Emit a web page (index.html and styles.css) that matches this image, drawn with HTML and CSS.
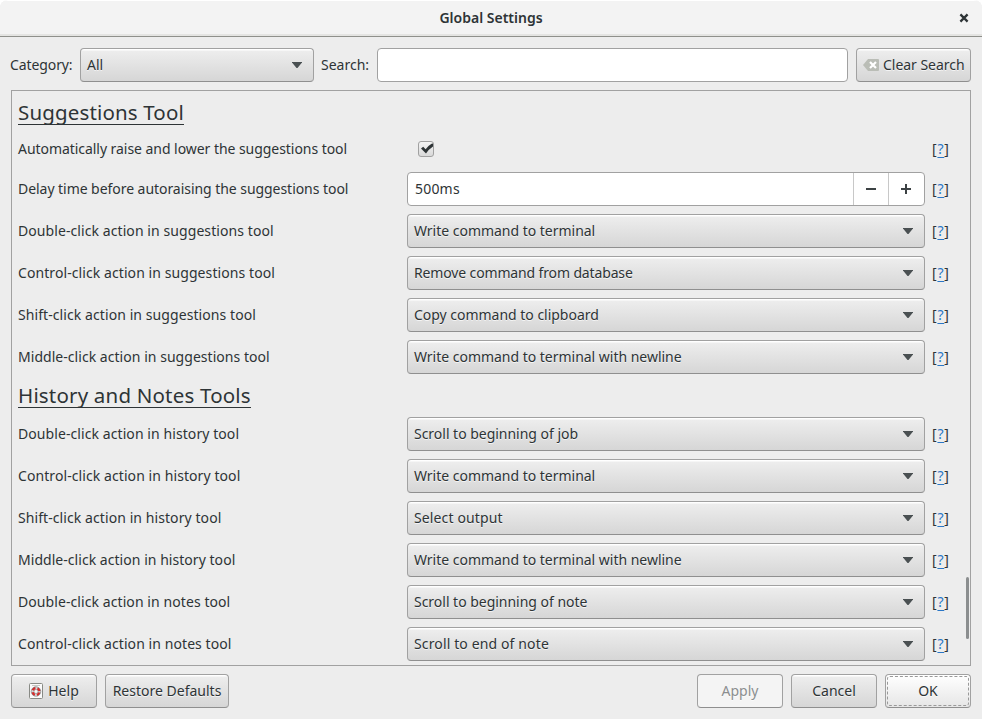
FILE: index.html
```html
<!DOCTYPE html>
<html lang="en">
<head>
<meta charset="utf-8">
<title>Global Settings</title>
<link rel="stylesheet" href="styles.css">
</head>
<body>
<div class="window">
  <header class="titlebar">
    <h1>Global Settings</h1>
    <svg class="close" width="10" height="10" viewBox="0 0 10 10"><path d="M1.4 1.4l7.2 7.2M8.6 1.4L1.4 8.6" stroke="#2e3436" stroke-width="2.3"/></svg>
  </header>
  <div class="toolbar">
    <span class="lbl-cat">Category:</span>
    <div class="combo cat"><span>All</span><i class="arrow"></i></div>
    <span class="lbl-search">Search:</span>
    <div class="entry"></div>
    <div class="button clear">
      <svg width="16" height="12" viewBox="0 0 16 12"><path d="M0 6L5 0h10q1 0 1 1v10q0 1-1 1H5z" fill="#babdb6"/><path d="M7 3l6 6M13 3L7 9" stroke="#fff" stroke-width="2.2"/></svg>
      <span>Clear Search</span>
    </div>
  </div>
  <main class="frame">
    <h2 class="h-sug"><span>Suggestions Tool</span></h2>
    <div class="row check-row"><span class="label tight">Automatically raise and lower the suggestions tool</span>
      <div class="field"><div class="check"><svg width="12" height="11" viewBox="0 0 12 11"><path d="M0 5.4L2.2 3.8l2.4 2.4Q7.4 2.6 10.6.8L12 .6v3Q8 6.2 5 10.4z" fill="#2e3436"/></svg></div></div>
      <span class="help">[<a>?</a>]</span></div>
    <div class="row"><span class="label tight">Delay time before autoraising the suggestions tool</span>
      <div class="spin field"><span>500ms</span><b><svg width="10" height="10"><path d="M0 5h10" stroke="#3c4244" stroke-width="2"/></svg></b><b><svg width="10" height="10"><path d="M0 5h10M5 0v10" stroke="#3c4244" stroke-width="2"/></svg></b></div>
      <span class="help">[<a>?</a>]</span></div>
    <div class="row"><span class="label">Double-click action in suggestions tool</span><div class="combo field"><span>Write command to terminal</span><i class="arrow"></i></div><span class="help">[<a>?</a>]</span></div>
    <div class="row"><span class="label">Control-click action in suggestions tool</span><div class="combo field"><span class="narrow">Remove command from database</span><i class="arrow"></i></div><span class="help">[<a>?</a>]</span></div>
    <div class="row"><span class="label">Shift-click action in suggestions tool</span><div class="combo field"><span>Copy command to clipboard</span><i class="arrow"></i></div><span class="help">[<a>?</a>]</span></div>
    <div class="row"><span class="label mid">Middle-click action in suggestions tool</span><div class="combo field"><span>Write command to terminal with newline</span><i class="arrow"></i></div><span class="help">[<a>?</a>]</span></div>
    <h2 class="h-hist"><span>History and Notes Tools</span></h2>
    <div class="row"><span class="label">Double-click action in history tool</span><div class="combo field"><span>Scroll to beginning of job</span><i class="arrow"></i></div><span class="help">[<a>?</a>]</span></div>
    <div class="row"><span class="label">Control-click action in history tool</span><div class="combo field"><span>Write command to terminal</span><i class="arrow"></i></div><span class="help">[<a>?</a>]</span></div>
    <div class="row"><span class="label">Shift-click action in history tool</span><div class="combo field"><span class="wide">Select output</span><i class="arrow"></i></div><span class="help">[<a>?</a>]</span></div>
    <div class="row"><span class="label mid">Middle-click action in history tool</span><div class="combo field"><span>Write command to terminal with newline</span><i class="arrow"></i></div><span class="help">[<a>?</a>]</span></div>
    <div class="row"><span class="label">Double-click action in notes tool</span><div class="combo field"><span>Scroll to beginning of note</span><i class="arrow"></i></div><span class="help">[<a>?</a>]</span></div>
    <div class="row"><span class="label">Control-click action in notes tool</span><div class="combo field"><span class="wide">Scroll to end of note</span><i class="arrow"></i></div><span class="help">[<a>?</a>]</span></div>
    <div class="thumb"></div>
  </main>
  <footer>
    <div class="button help-btn">
      <svg width="14" height="16" viewBox="0 0 14 16"><rect x=".5" y=".5" width="13" height="15" rx="1" fill="#fafafa" stroke="#888a85"/><path d="M3 2.5h8" stroke="#c8c8c4"/><circle cx="7" cy="8.5" r="3.5" fill="none" stroke="#d5d5d5" stroke-width="2.4"/><circle cx="7" cy="8.5" r="3.5" fill="none" stroke="#d62a2a" stroke-width="2.4" stroke-dasharray="3.4 2.098" stroke-dashoffset="-1.05" transform="rotate(0 7 8.5)"/><circle cx="7" cy="8.5" r="4.8" fill="none" stroke="#777" stroke-width=".6"/><circle cx="7" cy="8.5" r="2" fill="none" stroke="#777" stroke-width=".6"/></svg>
      <span>Help</span>
    </div>
    <div class="button restore"><span>Restore Defaults</span></div>
    <div class="spacer"></div>
    <div class="button apply"><span>Apply</span></div>
    <div class="button"><span>Cancel</span></div>
    <div class="button ok"><span>OK</span></div>
  </footer>
</div>
</body>
</html>
```
FILE: styles.css
```css
* { box-sizing: border-box; }
body { margin: 0; background: #fff; font: 14px/20px "Noto Sans", sans-serif; color: #2e3436; }
.window { width: 982px; height: 719px; background: #ededed; border-radius: 8px 8px 0 0; display: flex; flex-direction: column; overflow: hidden; white-space: nowrap; }
.titlebar { position: relative; height: 37px; flex: none; background: linear-gradient(#fff 1px, #f3f3f3 1px 34px, #e4e4e2 34px 36px); border-bottom: 1px solid #8f908b; display: flex; align-items: center; justify-content: center; }
h1 { margin: 0; font-size: 14px; font-weight: 600; }
.close { position: absolute; right: 13px; top: 13px; }
.toolbar { display: flex; align-items: center; height: 34px; margin: 11px 11px 0 10px; flex: none; }
.lbl-cat { width: 70px; letter-spacing: -.1px; }
.lbl-search { width: 56px; margin-left: 7px; }
.combo, .button { height: 34px; border: 1px solid #a1a1a1; border-bottom-color: #8f8f8f; border-radius: 4px; background: linear-gradient(#fff 1px, #ededed 2px, #d6d6d6); display: flex; align-items: center; text-shadow: 0 1px rgba(255,255,255,.7); }
.combo { justify-content: space-between; padding: 0 11px 0 6px; }
.combo span { letter-spacing: -.02px; }
.combo .narrow { letter-spacing: -.14px; }
.combo .wide { letter-spacing: .13px; }
.cat { width: 234px; }
.arrow { width: 10px; height: 6px; background: #4a5052; clip-path: polygon(0 0, 100% 0, 100% 8%, 55% 100%, 45% 100%, 0 8%); }
.entry { flex: 1; height: 34px; background: #fff; border: 1px solid #a1a1a1; border-radius: 4px; margin-right: 8px; }
.frame { position: relative; width: 960px; height: 576px; margin: 8px 0 0 11px; border: 1px solid #a1a1a1; padding-left: 6px; overflow: hidden; flex: none; }
h2 { margin: 0; font-size: 20.5px; line-height: 26px; font-weight: 400; }
h2 span { display: inline-block; height: 26px; border-bottom: 1px solid #2e3436; letter-spacing: .15px; }
.h-sug { padding-top: 8px; height: 38px; }
.h-hist { padding-top: 1px; height: 36px; margin-top: -1px; }
.h-hist span { letter-spacing: .19px; }
.row { display: flex; align-items: center; height: 34px; margin-bottom: 8px; }
.check-row { height: 40px; margin-bottom: 3px; }
.label { width: 389px; letter-spacing: .08px; }
.label.tight { letter-spacing: -.05px; }
.label.mid { letter-spacing: .04px; }
.field { width: 518px; }
.check { width: 16px; height: 16px; margin-left: 11px; border: 1px solid #a1a1a1; border-radius: 3px; background: linear-gradient(#f4f4f4, #d9d9d9); padding: 1px 0 0 2px; display: flex; }
.spin { height: 34px; background: #fff; border: 1px solid #a1a1a1; border-radius: 4px; display: flex; align-items: stretch; line-height: 32px; }
.spin span { flex: 1; padding-left: 7px; letter-spacing: .2px; }
.spin b { width: 35px; border-left: 1px solid #c8c8c8; display: flex; align-items: center; justify-content: center; }
.spin b:last-child { width: 36px; padding-right: 1px; }
.help { margin-left: 7px; letter-spacing: .8px; }
.help a { color: #2a76c6; text-decoration: underline; text-underline-offset: 3px; text-decoration-skip-ink: none; }
.thumb { position: absolute; left: 954px; top: 486px; width: 3px; height: 62px; border-radius: 2px; background: #8b8e8f; }
footer { display: flex; height: 34px; margin: 8px 11px 0; gap: 8px; flex: none; }
.button { justify-content: center; width: 86px; }
.clear { width: 115px; justify-content: flex-start; padding-left: 7px; gap: 4px; letter-spacing: -.03px; }
.clear svg { margin-left: -1px; flex: none; }
.help-btn { gap: 5px; }
.restore { width: 124px; }
.spacer { flex: 1; }
.apply { background: #f4f4f4; color: #8b8e8f; }
.ok { background: linear-gradient(#fff, #e6e6e6); position: relative; }
.ok::after { content: ""; position: absolute; inset: 1px; border: 1px dashed #999; border-radius: 3px; }
```
